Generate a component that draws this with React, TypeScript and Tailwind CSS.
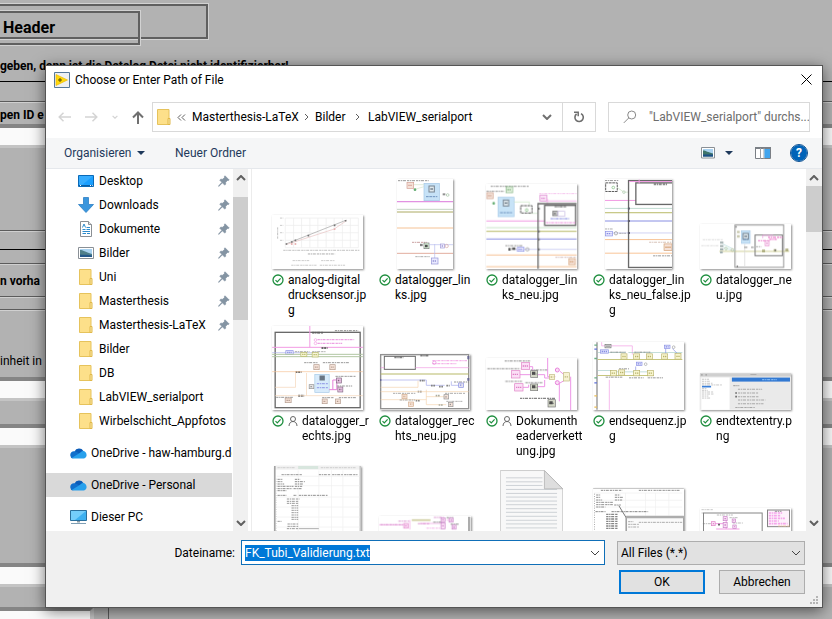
import { useEffect, useRef, type ReactNode } from "react";

/* ---------- small drawing helpers for the thumbnails ---------- */

function Wire({ d, c = "#555", w = 2 }: { d: string; c?: string; w?: number }) {
  return <path d={d} stroke={c} strokeWidth={w} fill="none" />;
}

function Scribble({ d, c = "#777", w = 3 }: { d: string; c?: string; w?: number }) {
  return <path d={d} stroke={c} strokeWidth={w} strokeDasharray="7 2 4 2 9 3" fill="none" opacity={0.75} />;
}

function Node({ x, y, w = 20, h = 18, c = "#c08a70", f = "#f3dcd0" }: { x: number; y: number; w?: number; h?: number; c?: string; f?: string }) {
  return (
    <g>
      <rect x={x} y={y} width={w} height={h} fill={f} stroke={c} strokeWidth={2} />
      <path d={`M${x + 4} ${y + h / 2}h${w - 8}`} stroke={c} strokeWidth={4} strokeDasharray="4 2" />
    </g>
  );
}

function BlueBlock({ x, y, w, h }: { x: number; y: number; w: number; h: number }) {
  return (
    <g>
      <rect x={x} y={y} width={w} height={h} fill="#b9dcf6" stroke="#8dbbe0" strokeWidth={2} />
      <rect x={x + w / 2 - 8} y={y + 8} width={16} height={18} fill="#d8e4ea" stroke="#567" strokeWidth={3} />
      <path d={`M${x + w / 2 - 4} ${y + 17}h8`} stroke="#456" strokeWidth={4} />
      <path d={`M${x + 6} ${y + h - 12}h${w - 12}`} stroke="#4b78b0" strokeWidth={3} strokeDasharray="8 2" />
    </g>
  );
}

function Thumb({ box, w, h, children }: { box: string; w: number; h: number; children: ReactNode }) {
  return (
    <svg viewBox={box} width={w} height={h} className="bg-white shadow-[1px_1px_2px_rgba(0,0,0,0.45)]" aria-hidden="true">
      <g opacity={0.8}>{children}</g>
    </svg>
  );
}

const PINK = "#ee82dc";
const ORANGE = "#f5b47c";
const OLIVE = "#a6a840";
const BLUE = "#6a72dc";

const chartThumb = (
  <Thumb box="38 135 274 162" w={91} h={54}>
    <Wire d="M78 144H298M78 166H298M78 188H298M78 211H298M78 233H298M78 144V233M103 144V233M127 144V233M152 144V233M176 144V233M201 144V233M225 144V233M250 144V233M274 144V233M298 144V233" c="#e8e8e8" />
    <Wire d="M80 222L262 150" c="#8a8a8a" />
    <Wire d="M80 224L225 177L262 152" c="#e3b3b3" />
    <path d="M79 222h5M95 216h5M106 211h5M145 197h5M224 166h5M257 152h5" stroke="#555" strokeWidth={5} />
    <path d="M95 222h5M106 222h5M224 177h5" stroke="#d88" strokeWidth={4} />
    <Scribble d="M72 241H302" c="#999" />
    <Scribble d="M146 252H228" />
    <Scribble d="M55 172V206" c="#999" />
    <Scribble d="M62 144h10M62 166h10M62 188h10M62 211h10" c="#aaa" />
    <Scribble d="M100 272H150M186 272H228" c="#aaa" />
    <Scribble d="M96 286H172M182 286H258" c="#aaa" />
  </Thumb>
);

const linksThumb = (
  <Thumb box="411 27 168 270" w={56} h={90}>
    <Scribble d="M414 32H506" c="#555" />
    <Node x={441} y={37} c="#c98878" />
    <BlueBlock x={492} y={40} w={46} h={52} />
    <Wire d="M462 44H492M465 58L492 50" c="#c9dfc0" />
    <circle cx={465} cy={59} r={4} fill="#3f9a50" />
    <path d="M548 73h8" stroke="#777" strokeWidth={6} />
    <circle cx={563} cy={75} r={4} fill="none" stroke="#8ab08a" strokeWidth={2} />
    <Wire d="M411 95H579" c="#dc78dc" w={4} />
    <Wire d="M411 118H579" c="#8fb08f" />
    <Wire d="M411 126H579" c="#98963c" w={3} />
    <Wire d="M411 174H579" c={ORANGE} w={3} />
    <Wire d="M411 250H579" c="#dd9a88" w={3} />
    <Scribble d="M456 217H500" c="#a66" />
    <path d="M480 225h8" stroke="#666" strokeWidth={7} />
    <rect x={492} y={219} width={15} height={17} fill="#dfd" stroke="#555" strokeWidth={2} />
    <path d="M495 228h8" stroke="#222" strokeWidth={8} />
    <Wire d="M507 224H579M524 222V264" c="#a8acec" />
    <Node x={541} y={222} w={12} h={12} c="#8a80cc" f="#eef" />
    <circle cx={560} cy={228} r={5} fill="none" stroke="#cc9090" strokeWidth={2} />
    <Scribble d="M466 260H510" />
    <Node x={514} y={264} c="#7a7acc" f="#e6e6ff" />
  </Thumb>
);

const linksNeuThumb = (
  <Thumb box="51 42 271 255" w={91} h={85}>
    <Scribble d="M64 49H178" c="#555" />
    <Scribble d="M51 64H106" c="#555" />
    <Node x={52} y={68} />
    <Node x={110} y={50} c="#5d9a5d" f="#dff0d8" />
    <circle cx={73} cy={100} r={4} fill="#3f9a50" />
    <BlueBlock x={86} y={82} w={48} h={58} />
    <Wire d="M134 96H180V130H205" c="#b8dcb0" />
    <rect x={154} y={107} width={34} height={22} fill="#fff" stroke="#333" strokeWidth={3} strokeDasharray="8 2" />
    <circle cx={172} cy={120} r={4} fill="none" stroke="#5a5" strokeWidth={2} />
    <Scribble d="M210 70H322" c={PINK} />
    <Node x={212} y={76} c="#d060c0" f="#fbe0f7" />
    <Wire d="M234 86V104M234 93H322" c={PINK} />
    <Wire d="M51 153H322" c={PINK} w={3} />
    <Wire d="M51 173H322" c="#9ecf9e" />
    <Wire d="M51 184H322" c={OLIVE} w={3} />
    <Wire d="M51 207H322" c={BLUE} w={3} />
    <Wire d="M51 255H322M51 290H322" c={ORANGE} w={3} />
    <Wire d="M130 238H322" c="#a8acec" />
    <Wire d="M206 297V101H322" c="#444" w={4} />
    <rect x={226} y={106} width={93} height={60} fill="#fff" stroke="#444" strokeWidth={4} />
    <Scribble d="M256 110H290" c="#444" w={5} />
    <Node x={250} y={124} w={15} h={13} c="#333" f="#bbb" />
    <rect x={266} y={124} width={20} height={15} fill="#fff" stroke="#b8a8dc" strokeWidth={2} />
    <Scribble d="M244 146H300" c={BLUE} w={5} />
    <Scribble d="M230 158H318" c={PINK} w={4} />
    <path d="M205 116h6M205 184h6M205 208h6M205 238h6" stroke="#444" strokeWidth={6} />
    <Scribble d="M108 227H160" c="#555" />
    <path d="M117 238h7M128 236h10" stroke="#333" strokeWidth={8} />
    <Node x={144} y={232} w={20} h={12} c={BLUE} f="#e6e6ff" />
    <circle cx={174} cy={238} r={5} fill="none" stroke="#777" strokeWidth={2} />
    <Scribble d="M258 262H320" c="#b99" />
    <Node x={298} y={266} c="#c98850" />
  </Thumb>
);

const falseThumb = (
  <Thumb box="405 27 202 270" w={67} h={90}>
    <Scribble d="M405 31H445" c="#555" />
    <rect x={407} y={38} width={35} height={26} fill="#fff" stroke="#333" strokeWidth={3} strokeDasharray="8 2" />
    <circle cx={430} cy={52} r={4} fill="none" stroke="#5a5" strokeWidth={2} />
    <Wire d="M442 52L462 66H476" c="#b8dcb0" />
    <circle cx={462} cy={66} r={4} fill="none" stroke="#9b9" strokeWidth={2} />
    <Wire d="M405 91H607" c={PINK} w={3} />
    <Wire d="M405 115H607" c="#8cc0a8" />
    <Wire d="M405 128H607" c={OLIVE} w={3} />
    <Wire d="M405 153H607" c={BLUE} w={3} />
    <Wire d="M405 189H607" c="#a8acec" />
    <Wire d="M405 209H607M405 250H607" c={ORANGE} w={3} />
    <rect x={476} y={31} width={134} height={262} fill="none" stroke="#444" strokeWidth={4} />
    <rect x={498} y={38} width={112} height={65} fill="#fff" stroke="#444" strokeWidth={4} />
    <Wire d="M478 34H607M508 28V40" c={PINK} w={3} />
    <Scribble d="M552 42H594" c="#444" w={6} />
    <Scribble d="M405 177H428" />
    <Node x={406} y={184} w={22} h={14} c={BLUE} f="#e6e6ff" />
    <circle cx={438} cy={190} r={5} fill="none" stroke="#777" strokeWidth={2} />
    <Scribble d="M448 190H468" />
    <path d="M474 153h6M474 189h6M474 115h6" stroke="#334" strokeWidth={6} />
    <Scribble d="M538 217H607" c="#b98" />
    <Node x={583} y={222} w={24} h={20} c="#c98850" />
    <Scribble d="M550 258H607" c="#555" />
  </Thumb>
);

const neuThumb = (
  <Thumb box="693 162 271 135" w={91} h={45}>
    <rect x={797} y={165} width={146} height={127} fill="none" stroke="#777" strokeWidth={3} />
    <Scribble d="M700 209H760M696 227H750" c="#aaa" w={2} />
    <Wire d="M750 244H960" c={OLIVE} />
    <Wire d="M760 222L797 240M762 232L797 244" c="#9cc" />
    <path d="M752 218h10M752 228h10M752 238h10M752 247h8" stroke="#899" strokeWidth={6} />
    <circle cx={770} cy={236} r={4} fill="none" stroke="#9b8" strokeWidth={2} />
    <circle cx={789} cy={240} r={4} fill="none" stroke="#aa7" strokeWidth={2} />
    <path d="M803 186h8M803 199h8" stroke="#bb9" strokeWidth={7} />
    <BlueBlock x={816} y={182} w={26} h={38} />
    <Wire d="M826 222V290" c="#ccc" />
    <path d="M824 232h10M845 232h8" stroke="#999" strokeWidth={5} />
    <rect x={857} y={195} width={82} height={62} fill="none" stroke="#555" strokeWidth={3} />
    <Scribble d="M866 212H900M896 202H940M900 208H922" c="#e64cb8" w={4} />
    <Node x={887} y={213} w={12} h={14} c="#e070c0" f="#fdeafa" />
    <Wire d="M880 205V196H912" c={PINK} />
    <Scribble d="M860 230H876" />
    <path d="M878 243h9M913 241h8M948 240h9" stroke="#9a9a60" strokeWidth={8} />
    <path d="M918 238v5M800 168v5M804 287v5" stroke="#555" strokeWidth={4} />
  </Thumb>
);

const rechtsThumb = (
  <Thumb box="38 24 272 252" w={91} h={84}>
    <rect x={47} y={43} width={255} height={226} fill="none" stroke="#444" strokeWidth={4} />
    <Scribble d="M226 38H296" c="#444" />
    <Scribble d="M158 44H190" c="#333" w={6} />
    <Wire d="M151 24V88M38 88H310" c={PINK} w={3} />
    <Scribble d="M174 65H284M174 76H248" c="#e060d0" w={4} />
    <circle cx={168} cy={66} r={4} fill="none" stroke={PINK} strokeWidth={2} />
    <circle cx={168} cy={76} r={4} fill="none" stroke={PINK} strokeWidth={2} />
    <path d="M186 90h18M108 162h18M116 233h18" stroke="#444" strokeWidth={6} strokeDasharray="6 2" />
    <Wire d="M38 104H176" c="#9aa0e8" />
    <Node x={79} y={98} w={22} h={11} c={BLUE} f="#e0e0ff" />
    <Scribble d="M106 101H150M158 101H200" />
    <Wire d="M38 109H310M38 116H310" c="#9eb88c" w={3} />
    <Node x={124} y={103} w={18} h={12} c={OLIVE} f="#f7f5d0" />
    <Node x={158} y={103} w={18} h={14} c={OLIVE} f="#f7f5d0" />
    <Scribble d="M134 134H176M190 134H270" c="#555" />
    <Node x={163} y={140} w={16} h={15} c="#a08070" />
    <Node x={211} y={140} w={16} h={15} c="#a08070" />
    <Wire d="M38 161H310" c={ORANGE} />
    <Wire d="M47 208H108V161M141 165V233H310M47 233H141" c="#f2c9a4" />
    <rect x={166} y={169} width={43} height={54} fill="#cfe7fb" stroke="#8dbbe0" strokeWidth={2} />
    <path d="M180 180h16" stroke="#456" strokeWidth={15} />
    <Scribble d="M172 197H205M172 209H205" c={BLUE} w={4} />
    <Node x={149} y={200} w={14} h={12} c="#777" f="#ddd" />
    <Wire d="M209 215H232V188M220 215V186H232" c="#e060d0" w={3} />
    <Scribble d="M228 175H288M232 204H278" c="#555" />
    <Node x={231} y={180} w={15} h={15} c="#604060" f="#e8b8e0" />
    <Node x={235} y={207} w={15} h={15} c="#604060" f="#e8b8e0" />
    <Scribble d="M50 238H100M188 239H224M238 239H292" c="#555" />
    <Node x={77} y={240} w={18} h={14} c="#a08070" />
    <Node x={188} y={243} w={15} h={14} c="#a08070" />
    <Node x={228} y={243} w={15} h={14} c="#a08070" />
  </Thumb>
);

const rechtsNeuThumb = (
  <Thumb box="361 108 270 168" w={90} h={56}>
    <rect x={363} y={110} width={264} height={162} fill="none" stroke="#777" strokeWidth={4} />
    <rect x={374} y={115} width={93} height={39} fill="#fff" stroke="#444" strokeWidth={3} />
    <Scribble d="M404 118H432M482 113H506" c="#333" w={5} />
    <Wire d="M467 149H627M363 149H374" c={PINK} w={2} />
    <Scribble d="M518 128H622M518 137H590" c={PINK} w={4} />
    <circle cx={524} cy={134} r={5} fill="none" stroke="#e060d0" strokeWidth={2} />
    <Wire d="M363 168H627" c={OLIVE} w={3} />
    <Wire d="M363 186H500V202H555M575 190V202H600" c="#8b92e4" />
    <path d="M480 188h16M474 221h14M468 248h14M514 203h14M538 206h12M560 203h10" stroke="#666" strokeWidth={5} strokeDasharray="5 2" />
    <Scribble d="M583 192H627" c="#555" />
    <Node x={597} y={195} w={14} h={13} c={BLUE} f="#dde" />
    <Wire d="M363 208H475V188M363 221H627M500 215V260H560M363 245H500M500 236H556" c="#f3c89c" w={2} />
    <Scribble d="M400 226H468M420 246H466M556 226H616M560 250H608" c="#777" />
    <Node x={427} y={229} w={15} h={13} c="#c99a70" />
    <Node x={447} y={252} w={15} h={13} c="#c99a70" />
    <Node x={553} y={230} w={14} h={13} c="#777" />
    <Node x={566} y={253} w={14} h={13} c="#777" />
    <path d="M528 233h12M537 261h12" stroke="#998" strokeWidth={5} strokeDasharray="5 2" />
    <path d="M626 114v10M626 180v8M362 183v6" stroke="#447" strokeWidth={6} />
  </Thumb>
);

const kettungThumb = (
  <Thumb box="50 120 273 156" w={91} h={52}>
    <Scribble d="M106 129H182" c="#444" />
    <Scribble d="M54 152H152" c="#444" />
    <Scribble d="M108 190H158M168 194H222" c="#444" />
    <Scribble d="M184 156H236" c="#444" />
    <Scribble d="M152 241H258" c="#333" w={4} />
    <Wire d="M235 120V176H258M180 146H190V166M152 170H186M160 208H178V200M206 170H226V180H242M206 206H226V186M270 250V196L284 188M272 160L284 170M304 176V276" c="#e87ce0" w={3} />
    <Node x={156} y={134} w={25} h={20} c="#d860b8" f="#fbd8f4" />
    <Node x={126} y={158} w={26} h={22} c="#d860b8" f="#fbd8f4" />
    <Node x={136} y={197} w={25} h={22} c="#d860b8" f="#fbd8f4" />
    <Node x={184} y={158} w={21} h={20} c="#555" f="#c8ccb8" />
    <Node x={184} y={198} w={21} h={20} c="#555" f="#c8ccb8" />
    <Node x={236} y={245} w={22} h={22} c="#555" f="#c8ccb8" />
    <path d="M188 166h10M188 206h10M240 254h10" stroke="#222" strokeWidth={9} />
    <Node x={240} y={170} w={16} h={14} c="#b0a860" f="#f5f1c8" />
    <Node x={282} y={164} w={18} h={25} c="#b0a860" f="#f5f1c8" />
    <circle cx={264} cy={156} r={6} fill="#fbd8f4" stroke="#e060d0" strokeWidth={3} />
    <circle cx={264} cy={194} r={6} fill="#fbd8f4" stroke="#e060d0" strokeWidth={3} />
  </Thumb>
);

const sequenzThumb = (
  <Thumb box="372 73 273 203" w={91} h={68}>
    <path d="M384 73V276" stroke="#a4a4a4" strokeWidth={6} />
    <path d="M380 80v4M380 120v4M380 178v4" stroke="#4a9a6a" strokeWidth={8} />
    <path d="M380 92v4M380 193v4" stroke="#3b50d0" strokeWidth={8} />
    <path d="M380 232v4M380 266v4" stroke="#e8b030" strokeWidth={8} />
    <Wire d="M398 73V84H490V110M421 276V186" c={PINK} />
    <Wire d="M386 125H640M386 173H555" c="#b9b860" w={3} />
    <Wire d="M386 104H470M478 104H640M386 158H430M440 162H545" c="#8fc0b8" />
    <Wire d="M500 146V160M590 92V106M610 92L624 106" c={BLUE} />
    <Node x={408} y={80} w={18} h={10} c="#555" f="#ddd" />
    <Node x={394} y={96} w={24} h={10} c={BLUE} f="#dfe2ff" />
    <Node x={586} y={82} w={17} h={10} c={BLUE} f="#dfe2ff" />
    <Node x={502} y={133} w={17} h={10} c={BLUE} f="#dfe2ff" />
    <circle cx={614} cy={88} r={4} fill="none" stroke="#888" strokeWidth={2} />
    <circle cx={530} cy={139} r={4} fill="none" stroke="#888" strokeWidth={2} />
    <Scribble d="M424 103H470M496 103H544M450 153H480M410 178H460M480 180H524M536 180H582" c="#555" />
    <Node x={456} y={108} w={18} h={16} c="#a8a048" f="#f7f4c4" />
    <Node x={494} y={108} w={18} h={16} c="#a8a048" f="#f7f4c4" />
    <Node x={532} y={108} w={18} h={16} c="#a8a048" f="#f7f4c4" />
    <Node x={578} y={108} w={18} h={16} c="#a8a048" f="#f7f4c4" />
    <Node x={618} y={107} w={18} h={17} c="#a8a048" f="#f7f4c4" />
    <Node x={424} y={158} w={18} h={16} c="#a8a048" f="#f7f4c4" />
    <Node x={449} y={156} w={18} h={16} c="#a8a048" f="#f7f4c4" />
    <Node x={494} y={158} w={18} h={16} c="#a8a048" f="#f7f4c4" />
    <Node x={535} y={158} w={18} h={16} c="#a8a048" f="#f7f4c4" />
  </Thumb>
);

const entryThumb = (
  <Thumb box="695 167 271 109" w={91} h={37}>
    <rect x={695} y={167} width={271} height={109} fill="#e6e6e6" />
    <rect x={695} y={167} width={271} height={10} fill="#c4c4c4" />
    <path d="M698 172h5M711 172h5" stroke="#888" strokeWidth={4} />
    <path d="M845 171h18" stroke="#999" strokeWidth={3} />
    <rect x={699} y={180} width={84} height={96} fill="#fff" />
    <rect x={790} y={180} width={173} height={12} fill="#0058c8" />
    <Scribble d="M880 186H924" c="#7fc0ff" w={4} />
    <Scribble d="M701 185H722M701 191H724M701 197H732M701 202H760M701 213H716M701 218H718M701 223H734M701 229H736M701 235H720M701 241H726" c="#777" w={2} />
    <path d="M701 207H728" stroke="#0a60d0" strokeWidth={5} />
    <Scribble d="M794 204H812M808 215H880M808 226H868M808 237H870M808 247H890M808 258H884M800 269H858" c="#777" w={3} />
    <path d="M800 226h5M800 237h5" stroke="#444" strokeWidth={5} />
  </Thumb>
);

const sheetThumb = (
  <Thumb box="46 37 260 255" w={87} h={85}>
    <rect x={46} y={37} width={260} height={11} fill="#eee" />
    <rect x={118} y={37} width={60} height={9} fill="#cfe0d6" />
    <path d="M48 37V292" stroke="#777" strokeWidth={4} />
    <path d="M304 37V292" stroke="#999" strokeWidth={3} />
    <Wire d="M118 50V292M180 50V292M218 50V292M252 50V292M54 68H302M54 96H302M54 130H302M54 160H302M54 190H302M54 220H302" c="#ebebeb" />
    <Scribble d="M56 42H110M186 42H290" c="#999" w={2} />
    <Scribble d="M68 63H130M180 63H215M220 63H252M256 63H296" c="#555" w={3} />
    <Scribble d="M56 77H72M56 84H72M56 91H76M56 98H104M56 105H100M56 111H84M108 77H124M108 84H138M108 91H134M108 98H130M104 105H130" c="#444" w={3} />
    <Scribble d="M56 125H84M104 125H114M120 125H206" c="#444" w={3} />
    <Scribble d="M84 136H122M84 143H118M84 149H118M98 156H118M98 163H118M98 170H118M98 177H118M98 184H118M98 191H118M98 197H118M86 211H118M86 218H118M56 203H68M84 225H118" c="#555" w={3} />
    <path d="M52 75V292" stroke="#aaa" strokeWidth={2} strokeDasharray="3 4" />
    <path d="M120 225H180" stroke="#999" strokeWidth={3} />
  </Thumb>
);

const stripThumb = (
  <Thumb box="358 188 275 104" w={92} h={35}>
    <Wire d="M358 214H440M450 200V228M480 210H545M560 200H570" c={PINK} />
    <path d="M456 200H512" stroke="#c3bf86" strokeWidth={5} />
    <Scribble d="M362 214H430M416 203H448M522 192H552M474 211H510" c="#c050b0" w={3} />
    <Scribble d="M520 206H544M560 193H580M572 212H596" c="#444" w={3} />
    <Node x={432} y={210} w={13} h={14} c="#d860b8" f="#fbd8f4" />
    <Node x={543} y={193} w={13} h={12} c="#b860b8" f="#fbd8f4" />
    <Node x={543} y={208} w={13} h={18} c="#b860b8" f="#fbd8f4" />
    <Node x={568} y={194} w={12} h={12} c="#b860b8" f="#fbd8f4" />
    <Node x={576} y={215} w={12} h={12} c="#b860b8" f="#fbd8f4" />
    <Scribble d="M500 224H540" c={PINK} w={3} />
    <path d="M628 190V292" stroke="#999" strokeWidth={6} />
  </Thumb>
);

const textFile = (
  <svg viewBox="725 48 190 243" width={63} height={81} aria-hidden="true">
    <path d="M726 49H859L914 104V291H726Z" fill="#f8f8f8" stroke="#b4b4b4" strokeWidth={2} />
    <path d="M743 71H853M743 83H853M743 94H853M743 106H897M743 118H897M743 129H897M743 141H897M743 152H897M743 164H897M743 175H897M743 187H897M743 199H897M743 210H897M743 222H897M743 234H897M743 246H897" stroke="#b8bec4" strokeWidth={2} />
    <path d="M859 49L914 104H859Z" fill="#dedede" stroke="#a9a9a9" strokeWidth={2} />
  </svg>
);

const overlapThumb = (
  <Thumb box="163 103 272 189" w={91} h={63}>
    <rect x={163} y={103} width={272} height={3} fill="#bbb" />
    <Wire d="M260 118V186M320 118V186M350 118V186M390 118V186M166 118H430M166 140H430M166 160H430" c="#ececec" />
    <Scribble d="M186 110H250M300 110H340M344 110H424" c="#444" w={3} />
    <Scribble d="M172 124H184M172 131H184M172 139H190M172 146H222M172 153H222M172 160H200M228 124H244M228 131H254M228 139H250M226 154H246" c="#444" w={3} />
    <Scribble d="M170 174H200M218 174H328" c="#333" w={3} />
    <Scribble d="M202 182H236M202 189H236M202 196H236M202 203H236M202 210H236M202 217H236M202 224H236" c="#333" w={4} />
    <Wire d="M240 156L262 192" c="#555" w={3} />
    <rect x={262} y={190} width={173} height={102} fill="#fafafa" stroke="#777" strokeWidth={4} />
    <path d="M262 190H435" stroke="#999" strokeWidth={8} />
    <Scribble d="M268 204H284M268 212H300M268 220H300M300 206H430" c="#777" w={3} />
    <path d="M167 120V292" stroke="#999" strokeWidth={3} strokeDasharray="3 4" />
  </Thumb>
);

const pinkThumb = (
  <Thumb box="482 163 272 129" w={91} h={43}>
    <Scribble d="M486 168H520M486 178H492" c="#777" w={2} />
    <rect x={492} y={178} width={176} height={114} fill="none" stroke="#666" strokeWidth={3} />
    <Scribble d="M532 184H580M570 192H596M580 208H610M490 210H516" c="#555" w={2} />
    <Wire d="M520 210H560M530 226H600M560 188V226" c={PINK} w={3} />
    <Node x={516} y={204} w={11} h={12} c="#d860b8" f="#fbd8f4" />
    <Node x={551} y={189} w={12} h={12} c="#b860b8" f="#fbd8f4" />
    <Node x={551} y={206} w={12} h={16} c="#b860b8" f="#fbd8f4" />
    <Node x={578} y={196} w={10} h={10} c="#b860b8" f="#fbd8f4" />
    <Node x={580} y={214} w={10} h={10} c="#b860b8" f="#fbd8f4" />
    <path d="M536 213h5" stroke="#222" strokeWidth={5} />
    <rect x={684} y={169} width={66} height={50} fill="#fdf0fb" stroke="#666" strokeWidth={3} />
    <Scribble d="M688 178H730M688 186H724M688 194H736M688 202H718M688 210H744" c="#f070e0" w={5} />
    <Scribble d="M706 173H726" c="#555" />
    <Scribble d="M716 217H750" c={ORANGE} />
  </Thumb>
);

/* ---------- icons ---------- */

function FolderIcon({ className = "" }: { className?: string }) {
  return (
    <svg viewBox="0 0 14 16" className={`h-4 w-3.5 shrink-0 ${className}`} aria-hidden="true">
      <path d="M.5.5h11.5v15H.5z" fill="#fde08a" stroke="#e6c35c" />
      <path d="M11 9.5h2v6h-2z" fill="#fbe9a8" stroke="#e0b84a" />
    </svg>
  );
}

function DesktopIcon() {
  return (
    <svg viewBox="0 0 16 16" className="size-4" aria-hidden="true">
      <path d="M.5 2.5h15v11H.5z" fill="#1a9fff" stroke="#0a6ab8" />
      <path d="M1 12.5h14" stroke="#0b5fa5" strokeWidth={1} />
      <path d="M2 12.5h1M12 12.5h1M14 12.5h.7" stroke="#fff" />
      <path d="M15 3L4 12H1V3z" fill="#4bb7ff" opacity=".6" />
    </svg>
  );
}

function DownloadIcon() {
  return (
    <svg viewBox="0 0 16 16" className="size-4" aria-hidden="true">
      <path d="M5.5.5h5v7h5L8 15.5.5 7.500h5z" fill="#3a96dd" stroke="#2b7fc4" strokeWidth=".8" />
    </svg>
  );
}

function DocumentIcon() {
  return (
    <svg viewBox="0 0 16 16" className="size-4" aria-hidden="true">
      <path d="M2.500.5h8l3 3v12h-11z" fill="#fff" stroke="#8a8f94" />
      <path d="M10.500.5v3h3" fill="#e4e4e4" stroke="#8a8f94" />
      <path d="M4.500 6.500L6 3l1.500 3.500M4.500 8.500h3M8.500 6.500h3.500M8.500 8.500H12M4.500 10.500H12M4.500 12.500H8M9 12.500h3" stroke="#2d8ccd" fill="none" />
    </svg>
  );
}

function PictureIcon() {
  return (
    <svg viewBox="0 0 16 16" className="size-4" aria-hidden="true">
      <path d="M.5 2.500h15v11H.5z" fill="#fff" stroke="#8a9096" />
      <path d="M2 4h12v8H2z" fill="#a9d2f0" />
      <path d="M2 5c3 0 5 2 12 4v3H2z" fill="#4f7f8a" />
      <path d="M2 9.500c4 .5 8-.5 12 1V12H2z" fill="#23578a" />
    </svg>
  );
}

function CloudIcon() {
  return (
    <svg viewBox="0 0 17 12" className="h-3 w-[17px] shrink-0" aria-hidden="true">
      <path d="M4.500 4.500A5 5 0 0 1 13.400 4L15 7l-6 2z" fill="#0b5cb8" />
      <path d="M.3 8.500A3.700 3.700 0 0 1 4.500 4.300c1.600 0 3.500 1.600 6 2.500L3 11.500A3.200 3.200 0 0 1 .3 8.500z" fill="#1170cc" />
      <path d="M11 5c.8-1 2-1.100 2.600-1 1.700.3 3.100 2 3 4.200-.1 2-1.500 3.200-3 3.300H4c-1 0-1.700-.2-2-.7L9 6.500z" fill="#28a0ec" />
    </svg>
  );
}

function ComputerIcon() {
  return (
    <svg viewBox="0 0 17 16" className="h-4 w-[17px] shrink-0" aria-hidden="true">
      <path d="M.5 1.500h16v10H.5z" fill="#3db0f0" stroke="#2a6f9c" />
      <path d="M16 2L5 11H1V2z" fill="#74cdfa" />
      <path d="M7 12h3v1.500H7z" fill="#8a9aa5" />
      <path d="M1 14.500h15" stroke="#7f9fb5" />
    </svg>
  );
}

function PinIcon() {
  return (
    <svg viewBox="0 0 12 12" className="size-3" aria-hidden="true">
      <path d="M7 .8L11.200 5l-1.100.6-.6-.2-1.900 1.900.1 1.900-1 .9L4.400 7.800.8 11.400l-.3-.3L3.900 7.300 1.800 5.200l.9-1 1.900.1L6.500 2.400l-.2-.6z" fill="#8494a3" stroke="#8494a3" strokeWidth=".7" />
    </svg>
  );
}

function Chevron({ d = "M1 1l4 4 4-4", w = 2, c = "#606060", box = "0 0 10 6", className = "h-1.5 w-2.5" }: { d?: string; w?: number; c?: string; box?: string; className?: string }) {
  return (
    <svg viewBox={box} className={`shrink-0 ${className}`} aria-hidden="true">
      <path d={d} fill="none" stroke={c} strokeWidth={w} />
    </svg>
  );
}

function Caret() {
  return (
    <svg viewBox="0 0 8 4" className="h-1 w-2 shrink-0" aria-hidden="true">
      <path d="M0 0h8L4 4z" fill="#1e395b" />
    </svg>
  );
}

function SyncedIcon() {
  return (
    <svg viewBox="0 0 12 12" className="mt-px size-3 shrink-0" aria-label="Synchronisiert">
      <circle cx="6" cy="6" r="5" fill="#fff" stroke="#1e8e3e" strokeWidth="1.300" />
      <path d="M3.500 6.200L5.300 8l3.300-3.600" fill="none" stroke="#1e8e3e" strokeWidth="1.200" />
    </svg>
  );
}

function PersonIcon() {
  return (
    <svg viewBox="0 0 10 12" className="mt-px h-3 w-2.5 shrink-0" aria-label="Freigegeben">
      <circle cx="5" cy="4" r="2.500" fill="none" stroke="#666" />
      <path d="M1 11c0-3 2-4.500 4-4.500S9 8 9 11" fill="none" stroke="#666" />
    </svg>
  );
}

/* ---------- data ---------- */

type Place = { name: string; icon: ReactNode; pinned?: boolean };

const places: Place[] = [
  { name: "Desktop", icon: <DesktopIcon />, pinned: true },
  { name: "Downloads", icon: <DownloadIcon />, pinned: true },
  { name: "Dokumente", icon: <DocumentIcon />, pinned: true },
  { name: "Bilder", icon: <PictureIcon />, pinned: true },
  { name: "Uni", icon: <FolderIcon />, pinned: true },
  { name: "Masterthesis", icon: <FolderIcon />, pinned: true },
  { name: "Masterthesis-LaTeX", icon: <FolderIcon />, pinned: true },
  { name: "Bilder", icon: <FolderIcon /> },
  { name: "DB", icon: <FolderIcon /> },
  { name: "LabVIEW_serialport", icon: <FolderIcon /> },
  { name: "Wirbelschicht_Appfotos", icon: <FolderIcon /> },
];

const roots = [
  { name: "OneDrive - haw-hamburg.de", icon: <CloudIcon />, selected: false },
  { name: "OneDrive - Personal", icon: <CloudIcon />, selected: true },
  { name: "Dieser PC", icon: <ComputerIcon />, selected: false },
];

type FileEntry = { lines: string[]; thumb: ReactNode; shared?: boolean };

const files: FileEntry[] = [
  { lines: ["analog-digital", "drucksensor.jp", "g"], thumb: chartThumb },
  { lines: ["datalogger_lin", "ks.jpg"], thumb: linksThumb },
  { lines: ["datalogger_lin", "ks_neu.jpg"], thumb: linksNeuThumb },
  { lines: ["datalogger_lin", "ks_neu_false.jp", "g"], thumb: falseThumb },
  { lines: ["datalogger_ne", "u.jpg"], thumb: neuThumb },
  { lines: ["datalogger_r", "echts.jpg"], thumb: rechtsThumb, shared: true },
  { lines: ["datalogger_rec", "hts_neu.jpg"], thumb: rechtsNeuThumb },
  { lines: ["Dokumenth", "eaderverkett", "ung.jpg"], thumb: kettungThumb, shared: true },
  { lines: ["endsequenz.jp", "g"], thumb: sequenzThumb },
  { lines: ["endtextentry.p", "ng"], thumb: entryThumb },
  { lines: [], thumb: sheetThumb },
  { lines: [], thumb: stripThumb },
  { lines: [], thumb: textFile },
  { lines: [], thumb: overlapThumb },
  { lines: [], thumb: pinkThumb },
];

/* ---------- front panel behind the dialog ---------- */

function Groove() {
  return <div className="h-0.5 border-t border-b border-t-[#5c5c5c] border-b-[#d0d0d0]" />;
}

function Field() {
  return <div className="h-6 border-t-4 border-b-3 border-t-[#858585] border-b-[#c4c4c4] bg-[#fafafa]" />;
}

function FrontPanel() {
  return (
    <div className="flex flex-col text-black">
      <div className="relative h-[57px] pt-1">
        <div className="h-[35px] w-[208px] border-2 border-l-0 border-[#606060] outline outline-[#d2d2d2]" />
        <div className="absolute top-[11px] left-0 flex h-[34px] w-[140px] items-center border-2 border-l-0 border-[#606060] pl-[3px] text-base font-bold outline outline-[#d2d2d2]">
          Header
        </div>
      </div>
      <p className="h-6 leading-[18px] font-bold whitespace-nowrap">geben, dann ist die Datalog Datei nicht identifizierbar!</p>
      <div className="h-5 border-t border-black" />
      <Groove />
      <p className="h-[21px] leading-6 font-bold">pen ID e</p>
      <Field />
      <div className="h-[82px]" />
      <Groove />
      <div className="h-[17px]" />
      <div className="h-3.5 border-t border-black" />
      <Groove />
      <p className="h-[31px] leading-8 font-bold">n vorha</p>
      <Groove />
      <div className="h-[11px]" />
      <Groove />
      <p className="h-[66px] pt-[38px] leading-6">inheit in</p>
      <Field />
      <div className="h-[23px]" />
      <Field />
      <div className="h-[115px]" />
      <Field />
      <div className="h-5" />
      <div className="flex h-3">
        <div className="w-[94px] border-t-4 border-r-4 border-t-[#858585] border-r-[#c4c4c4] bg-[#fafafa]" />
        <div className="w-[15px] border-r border-[#5c5c5c]" />
      </div>
    </div>
  );
}

/* ---------- dialog parts ---------- */

function ScrollBar({ before, thumb, className }: { before: string; thumb: string; className: string }) {
  return (
    <div className={`flex flex-col items-center bg-[#f0f0f0] ${className}`}>
      <div className={`flex w-full items-center justify-center ${before}`}>
        <Chevron d="M1 5l4-4 4 4" />
      </div>
      <div className={`w-full bg-[#cdcdcd] ${thumb}`} />
      <div className="mt-auto flex h-[17px] items-center">
        <Chevron />
      </div>
    </div>
  );
}

function TitleBar() {
  return (
    <header className="flex h-9 items-start justify-between pt-1.5 pr-2.5 pl-2">
      <div className="flex items-center gap-[5px]">
        <svg viewBox="0 0 16 16" className="size-4" aria-hidden="true">
          <path d="M.5.5h15v15H.5z" fill="#eef0f2" stroke="#56789a" />
          <path d="M2 2.500L13.500 8 2 13.500z" fill="#ffd90a" stroke="#e9b400" strokeWidth=".6" />
          <path d="M4 8h4M6 6v4" stroke="#5a4a00" />
        </svg>
        <h1>Choose or Enter Path of File</h1>
      </div>
      <button aria-label="Schließen" className="pt-0.5">
        <svg viewBox="0 0 11 11" className="size-[11px]" aria-hidden="true">
          <path d="M.5.5l10 10M10.500.5l-10 10" stroke="#000" />
        </svg>
      </button>
    </header>
  );
}

function AddressRow() {
  return (
    <div className="flex h-[30px] items-stretch px-3 whitespace-nowrap">
      <div className="flex w-[94px] items-center justify-between pr-2">
        <button aria-label="Zurück">
          <svg viewBox="0 0 13 10" className="h-2.5 w-[13px]" aria-hidden="true">
            <path d="M5.500.7L1.200 5l4.300 4.300M1.200 5H13" fill="none" stroke="#d4d4d4" strokeWidth="1.500" />
          </svg>
        </button>
        <button aria-label="Vorwärts">
          <svg viewBox="0 0 13 10" className="h-2.5 w-[13px]" aria-hidden="true">
            <path d="M7.500.7L11.800 5 7.500 9.300M11.800 5H0" fill="none" stroke="#d4d4d4" strokeWidth="1.500" />
          </svg>
        </button>
        <button aria-label="Verlauf">
          <Chevron c="#d4d4d4" box="0 0 10 6" className="h-1 w-1.5" />
        </button>
        <button aria-label="Nach oben">
          <svg viewBox="0 0 12 13" className="h-[13px] w-3" aria-hidden="true">
            <path d="M1 6.500l5-5 5 5M6 1.500V13" fill="none" stroke="#707070" strokeWidth="2" />
          </svg>
        </button>
      </div>
      <nav aria-label="Pfad" className="flex flex-1 items-center border border-[#d9d9d9] pl-1">
        <FolderIcon />
        <Chevron d="M4 .5L1 3.500l3 3M8 .5L5 3.500l3 3" w={1} box="0 0 9 7" className="ml-1.5 h-[7px] w-[9px]" />
        <button className="ml-1.5 w-[104px] text-left">Masterthesis-LaTeX</button>
        <Chevron d="M1 1l3 3-3 3" box="0 0 5 8" w={1} className="ml-2 h-2 w-[5px]" />
        <button className="ml-1.5 w-8 text-left">Bilder</button>
        <Chevron d="M1 1l3 3-3 3" box="0 0 5 8" w={1} className="ml-2 h-2 w-[5px]" />
        <button className="ml-2">LabVIEW_serialport</button>
        <button aria-label="Vorherige Orte" className="mr-2.5 ml-auto">
          <Chevron c="#707070" />
        </button>
        <button aria-label="Aktualisieren" className="flex w-[33px] items-center justify-center self-stretch border-l border-[#d9d9d9]">
          <svg viewBox="0 0 12 12" className="size-3" aria-hidden="true">
            <path d="M8 2.600A4.200 4.200 0 1 1 3.600 3" fill="none" stroke="#6e6e6e" strokeWidth="1.600" />
            <path d="M1 1.300h4.200v4" fill="none" stroke="#6e6e6e" strokeWidth="1.500" />
          </svg>
        </button>
      </nav>
      <label className="ml-3 flex w-[202px] items-center border border-[#d9d9d9] pl-3.5">
        <svg viewBox="0 0 14 14" className="size-3.5 shrink-0" aria-hidden="true">
          <circle cx="8.700" cy="5" r="4" fill="none" stroke="#8a8a8a" />
          <path d="M5.800 7.900L.8 12.900" stroke="#8a8a8a" />
        </svg>
        <input
          type="text"
          aria-label="Suchen"
          placeholder={'"LabVIEW_serialport" durchs...'}
          className="ml-3 min-w-0 flex-1 bg-transparent outline-none placeholder:text-[#6d6d6d]"
        />
      </label>
    </div>
  );
}

function ToolBar() {
  return (
    <div className="mt-1.5 flex h-[31px] items-center border-b border-[#e5e8ec] bg-[#f5f6f7] pr-[15px] pl-[18px] text-[#1e395b]">
      <button className="flex w-[111px] items-center gap-1.5">
        Organisieren <Caret />
      </button>
      <button>Neuer Ordner</button>
      <div className="ml-auto flex items-center">
        <button aria-label="Ansicht">
          <svg viewBox="0 0 14 12" className="h-3 w-3.5" aria-hidden="true">
            <path d="M.5.500h13v10.500H.5z" fill="#fff" stroke="#8a9096" />
            <path d="M2 2h10v7.500H2z" fill="#a9d2f0" />
            <path d="M2 3.500c3 0 5 2 10 3v3H2z" fill="#3e746a" />
            <path d="M2 7.500h10v2H2z" fill="#1d4f86" />
          </svg>
        </button>
        <button aria-label="Weitere Optionen" className="ml-2.5">
          <Caret />
        </button>
        <button aria-label="Vorschaufenster" className="ml-[22px]">
          <svg viewBox="0 0 16 12" className="h-3 w-4" aria-hidden="true">
            <path d="M.5.5h15v11H.5z" fill="#fff" stroke="#7a7f85" />
            <path d="M0 1h16" stroke="#7a7f85" strokeWidth="2" />
            <path d="M5.500 1v11M9 1v11" stroke="#9aa0a6" />
            <path d="M9.500 2H15v9H9.500z" fill="#41a5ee" />
          </svg>
        </button>
        <button aria-label="Hilfe" className="ml-5 flex size-4 items-center justify-center rounded-full bg-[#0063b8] font-bold text-white outline outline-[#0a4f91]">
          ?
        </button>
      </div>
    </div>
  );
}

function Sidebar() {
  return (
    <aside className="flex w-[206px] shrink-0 border-r border-[#ececec] bg-white">
      <nav aria-label="Ordner" className="w-[186px] overflow-hidden whitespace-nowrap">
        <ul>
          {places.map((p, i) => (
            <li key={i}>
              <button className="flex h-6 w-full items-center pr-0.5 pl-8">
                <span className="mr-[5px] flex w-4 justify-center">{p.icon}</span>
                {p.name}
                {p.pinned && (
                  <span className="ml-auto">
                    <PinIcon />
                  </span>
                )}
              </button>
            </li>
          ))}
        </ul>
        <ul className="mt-2 flex flex-col gap-2">
          {roots.map((r) => (
            <li key={r.name}>
              <button className={`flex h-6 w-full items-center gap-1 pl-6 ${r.selected ? "bg-[#d9d9d9]" : ""}`}>
                {r.icon}
                {r.name}
              </button>
            </li>
          ))}
        </ul>
      </nav>
      <ScrollBar before="h-7 pb-2.5" thumb="h-[123px]" className="ml-px w-[15px]" />
    </aside>
  );
}

function FileGrid() {
  return (
    <section aria-label="Dateien" className="flex-1 overflow-hidden bg-white pt-2 pl-3">
      <ul className="grid grid-cols-[repeat(auto-fill,107px)] auto-rows-[141px]">
        {files.map((f, i) => (
          <li key={i}>
            <button className="flex w-full flex-col">
              <span className="flex h-[92px] w-full items-end justify-center">{f.thumb}</span>
              {f.lines.length > 0 && (
                <span className="mt-1 flex w-full gap-1 pl-2 text-left leading-[15px] whitespace-nowrap">
                  <SyncedIcon />
                  {f.shared && <PersonIcon />}
                  <span className="flex flex-col">
                    {f.lines.map((l) => (
                      <span key={l}>{l}</span>
                    ))}
                  </span>
                </span>
              )}
            </button>
          </li>
        ))}
      </ul>
    </section>
  );
}

function Footer() {
  const nameRef = useRef<HTMLInputElement>(null);

  useEffect(() => {
    nameRef.current?.focus();
    nameRef.current?.select();
  }, []);

  return (
    <footer className="relative flex flex-col gap-[5px] bg-[#f0f0f0] pt-[9px] pr-[17px] pb-[13px]">
      <div className="flex items-center">
        <label htmlFor="filename" className="w-[195px] pr-1.5 text-right">
          Dateiname:
        </label>
        <div className="flex h-[25px] flex-1 items-center border border-[#0f6fb8] bg-white pr-1 pl-[3px]">
          <input
            id="filename"
            ref={nameRef}
            defaultValue="FK_Tubi_Validierung.txt"
            className="min-w-0 flex-1 outline-none selection:bg-[#0078d7] selection:text-white"
          />
          <button aria-label="Dateinamen anzeigen">
            <Chevron w={1} c="#444" />
          </button>
        </div>
        <div className="relative ml-3">
          <select aria-label="Dateityp" className="h-6 w-[188px] appearance-none border border-[#adadad] bg-[#e1e1e1] pl-[3px]">
            <option>All Files (*.*)</option>
          </select>
          <span className="pointer-events-none absolute top-[9px] right-1 flex">
            <Chevron w={1} c="#444" />
          </span>
        </div>
      </div>
      <div className="flex justify-end gap-3.5">
        <button className="h-6 w-[86px] border-2 border-[#0078d7] bg-[#e1e1e1]">OK</button>
        <button className="h-6 w-[86px] border border-[#adadad] bg-[#e1e1e1]">Abbrechen</button>
      </div>
      <svg viewBox="0 0 9 9" className="absolute right-[3px] bottom-0.5 size-[9px]" aria-hidden="true">
        <path d="M6 1h2M3 4h2M6 4h2M0 7h2M3 7h2M6 7h2" stroke="#b5b5b5" strokeWidth="2" />
      </svg>
    </footer>
  );
}

export default function App() {
  return (
    <main className="relative min-h-screen overflow-hidden bg-[#b2b2b2] font-['Roboto','Open_Sans',sans-serif] text-xs text-black">
      <FrontPanel />
      <div
        role="dialog"
        aria-label="Choose or Enter Path of File"
        className="absolute top-[65px] right-[9px] left-[45px] flex flex-col border border-[#555] bg-white shadow-[0_3px_14px_rgba(0,0,0,0.55)]"
      >
        <TitleBar />
        <AddressRow />
        <ToolBar />
        <div className="flex h-[362px]">
          <Sidebar />
          <FileGrid />
          <ScrollBar before="h-[17px]" thumb="h-[46px]" className="w-4" />
        </div>
        <Footer />
      </div>
    </main>
  );
}
